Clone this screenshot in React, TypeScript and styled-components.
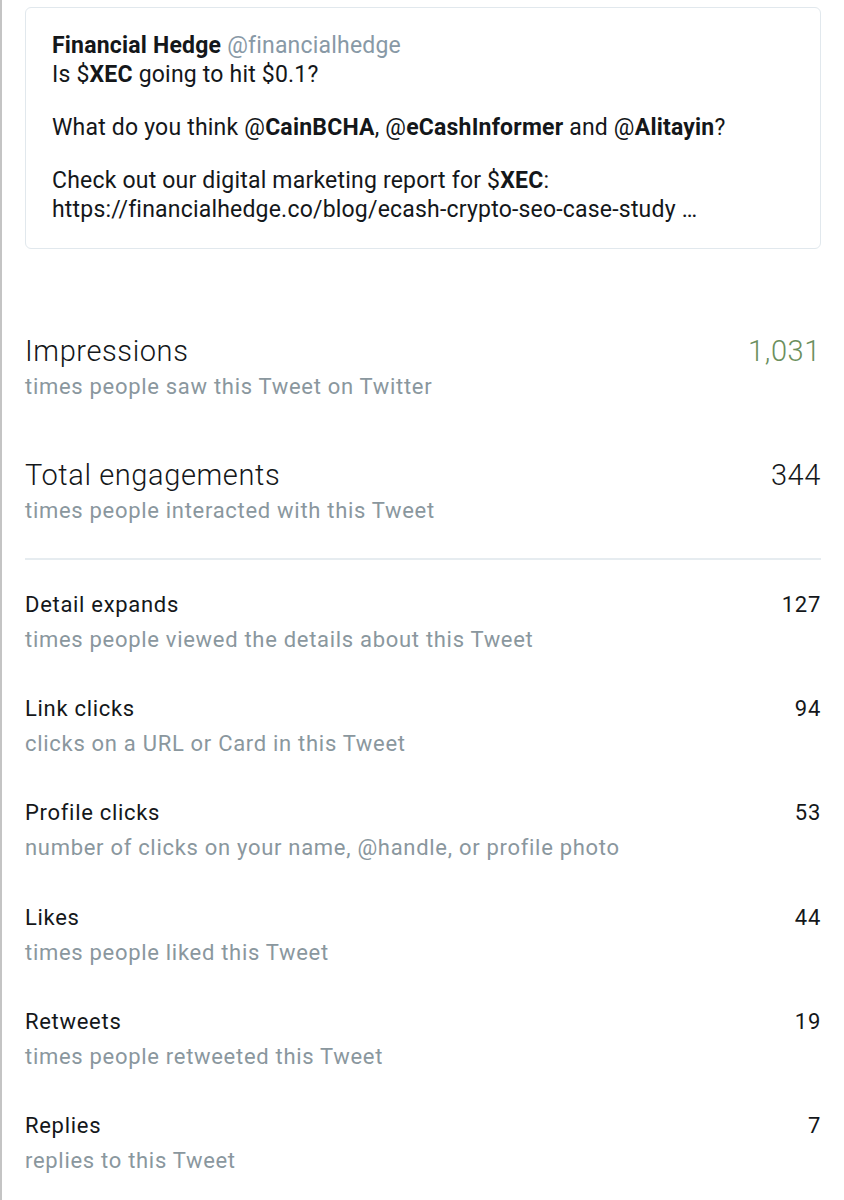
import React from 'react';
import styled, { createGlobalStyle } from 'styled-components';

const GlobalStyle = createGlobalStyle`
  html, body {
    margin: 0;
    padding: 0;
    background: #ffffff;
  }
  body {
    font-family: Roboto, "Noto Sans", "Liberation Sans", sans-serif;
    -webkit-font-smoothing: antialiased;
  }
`;

const Page = styled.div`
  min-height: 1200px;
  box-sizing: border-box;
  border-left: 2px solid #c4c4c4;
  padding: 7px 23px 0 23px;
`;

const Card = styled.div`
  border: 1px solid #e1e8ed;
  border-radius: 6px;
  padding: 23px 26px 24px 26px;
  font-size: 23px;
  letter-spacing: 0.2px;
  line-height: 29px;
  color: #14171a;
`;

const Author = styled.div`
  display: flex;
  gap: 6px;
  align-items: baseline;
`;

const Name = styled.span`
  font-weight: 700;
`;

const Handle = styled.span`
  color: #8899a6;
  font-weight: 400;
`;

const Para = styled.p<{ $gap?: boolean }>`
  margin: ${(p) => (p.$gap ? '24px 0 0' : '0')};
`;

const Strong = styled.b`
  font-weight: 700;
`;

const Stats = styled.div`
  margin-top: 85px;
`;

const Row = styled.div<{ $big?: boolean }>`
  display: grid;
  grid-template-columns: 1fr auto;
  margin-bottom: ${(p) => (p.$big ? '54px' : '34.2px')};
`;

const Label = styled.div<{ $big?: boolean }>`
  font-size: ${(p) => (p.$big ? '29px' : '22px')};
  letter-spacing: ${(p) => (p.$big ? '0.6px' : '0.7px')};
  font-weight: ${(p) => (p.$big ? 300 : 400)};
  line-height: 35px;
  color: #14171a;
`;

const Value = styled(Label)<{ $green?: boolean }>`
  text-align: right;
  color: ${(p) => (p.$green ? '#6b8f5d' : '#14171a')};
`;

const Sub = styled.div`
  grid-column: 1 / span 2;
  font-size: 22px;
  letter-spacing: 0.7px;
  line-height: 35px;
  color: #8a979e;
`;

const Divider = styled.hr`
  border: 0;
  border-top: 2px solid #e6ecf0;
  margin: -24px 0 27px;
`;

type Stat = { label: string; value: string; sub: string };

const big: (Stat & { green?: boolean })[] = [
  { label: 'Impressions', value: '1,031', sub: 'times people saw this Tweet on Twitter', green: true },
  { label: 'Total engagements', value: '344', sub: 'times people interacted with this Tweet' },
];

const small: Stat[] = [
  { label: 'Detail expands', value: '127', sub: 'times people viewed the details about this Tweet' },
  { label: 'Link clicks', value: '94', sub: 'clicks on a URL or Card in this Tweet' },
  { label: 'Profile clicks', value: '53', sub: 'number of clicks on your name, @handle, or profile photo' },
  { label: 'Likes', value: '44', sub: 'times people liked this Tweet' },
  { label: 'Retweets', value: '19', sub: 'times people retweeted this Tweet' },
  { label: 'Replies', value: '7', sub: 'replies to this Tweet' },
];

export default function App() {
  return (
    <Page>
      <GlobalStyle />
      <Card>
        <Author>
          <Name>Financial Hedge</Name>
          <Handle>@financialhedge</Handle>
        </Author>
        <Para>
          Is $<Strong>XEC</Strong> going to hit $0.1?
        </Para>
        <Para $gap>
          What do you think @<Strong>CainBCHA</Strong>, @<Strong>eCashInformer</Strong> and @
          <Strong>Alitayin</Strong>?
        </Para>
        <Para $gap>
          Check out our digital marketing report for $<Strong>XEC</Strong>:
          <br />
          https://financialhedge.co/blog/ecash-crypto-seo-case-study …
        </Para>
      </Card>

      <Stats>
        {big.map((s) => (
          <Row $big key={s.label}>
            <Label $big>{s.label}</Label>
            <Value $big $green={s.green}>
              {s.value}
            </Value>
            <Sub>{s.sub}</Sub>
          </Row>
        ))}
        <Divider />
        {small.map((s) => (
          <Row key={s.label}>
            <Label>{s.label}</Label>
            <Value>{s.value}</Value>
            <Sub>{s.sub}</Sub>
          </Row>
        ))}
      </Stats>
    </Page>
  );
}
